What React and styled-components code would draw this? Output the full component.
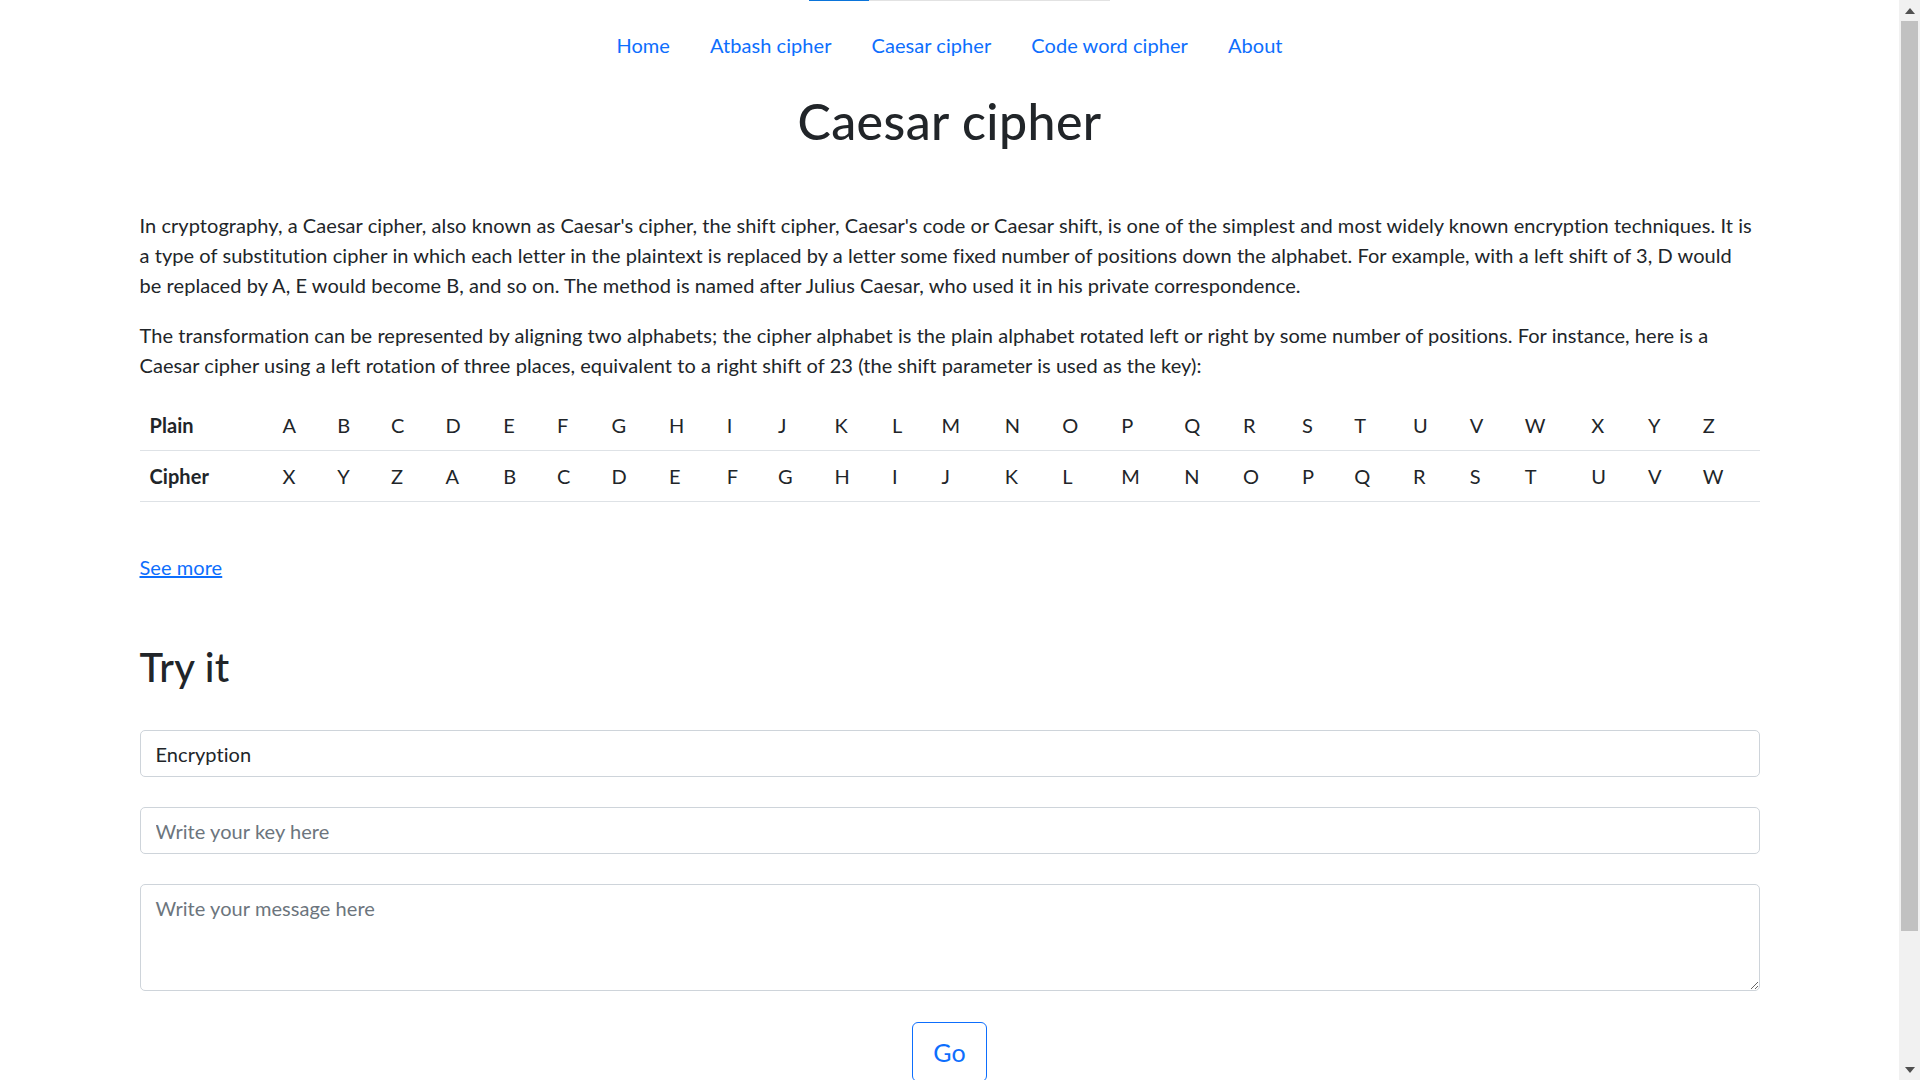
import React from "react";
import styled, { createGlobalStyle } from "styled-components";

const GlobalStyle = createGlobalStyle`
  html, body { margin: 0; padding: 0; background: #fff; }
  body {
    font-family: "Lato", "Segoe UI", sans-serif;
    font-size: 20px;
    line-height: 1.5;
    color: #212529;
    letter-spacing: 0.06px;
  }
  *, *::before, *::after { box-sizing: border-box; }
`;

const Page = styled.div`
  margin-right: 21px;
  min-height: 1100px;
`;

const LoadStrip = styled.div`
  height: 1px;
  display: flex;
  padding-left: 809px;
`;

const LoadTrack = styled.div`
  width: 301px;
  height: 1px;
  background: #e2e2e2;
  display: flex;
`;

const LoadFill = styled.div`
  width: 60px;
  height: 1px;
  background: #0a74da;
`;

const Nav = styled.nav`
  display: flex;
  justify-content: center;
  padding-top: 19px;
`;

const NavLink = styled.a`
  display: block;
  padding: 10px 20px;
  color: #0d6efd;
  text-decoration: none;
  font-size: 20px;
  line-height: 30px;
  cursor: pointer;
`;

const Container = styled.main`
  max-width: 1650px;
  margin: 0 auto;
  padding: 0 15px;
`;

const Title = styled.h1`
  font-size: 50px;
  font-weight: 500;
  line-height: 1.2;
  text-align: center;
  margin: 21px 0 59px;
  letter-spacing: 0.45px;
`;

const Para = styled.p`
  margin: 0 0 20px;
`;

const Table = styled.table`
  width: 100%;
  border-collapse: collapse;
  margin-bottom: 20px;
`;

const HeadCell = styled.th`
  text-align: left;
  font-weight: 700;
  padding: 10px 12px 10px 10px;
  border-bottom: 1px solid #dee2e6;
  line-height: 30px;
`;

const Cell = styled.td`
  padding: 10px;
  border-bottom: 1px solid #dee2e6;
  line-height: 30px;
`;

const MoreLink = styled.a`
  display: inline-block;
  margin-top: 30px;
  color: #0d6efd;
  text-decoration: underline;
  cursor: pointer;
`;

const SubTitle = styled.h2`
  font-size: 40px;
  font-weight: 500;
  line-height: 1.2;
  margin: 61px 0 39px;
  letter-spacing: 0.3px;
`;

const Form = styled.form`
  display: flex;
  flex-direction: column;
  gap: 30px;
`;

const fieldBase = `
  display: block;
  width: 100%;
  padding: 7.5px 15px;
  font-family: "Lato", "Segoe UI", sans-serif;
  font-size: 20px;
  line-height: 30px;
  color: #212529;
  background: #fff;
  border: 1px solid #ced4da;
  border-radius: 5px;
  letter-spacing: 0.06px;
  outline: none;
  &::placeholder { color: #6c757d; opacity: 1; }
`;

const Select = styled.select`
  ${fieldBase}
  appearance: none;
  height: 47px;
`;

const Input = styled.input`
  ${fieldBase}
  height: 47px;
`;

const TextArea = styled.textarea`
  ${fieldBase}
  height: 107px;
  resize: vertical;
`;

const ButtonRow = styled.div`
  display: flex;
  justify-content: center;
  padding-top: 1px;
`;

const GoButton = styled.button`
  font-family: "Lato", "Segoe UI", sans-serif;
  font-size: 25px;
  line-height: 37.5px;
  padding: 11px 20px 9px;
  color: #0d6efd;
  background: transparent;
  border: 1px solid #0d6efd;
  border-radius: 6px;
  cursor: pointer;
`;

const ScrollBar = styled.div`
  position: fixed;
  top: 0;
  right: 0;
  width: 21px;
  height: 100vh;
  background: #f1f1f1;
  display: flex;
  flex-direction: column;
`;

const ScrollArrow = styled.div`
  height: 21px;
  display: flex;
  align-items: center;
  justify-content: center;
`;

const ScrollThumb = styled.div`
  margin: 0 2px;
  height: 910px;
  background: #c1c1c1;
`;

const ScrollSpacer = styled.div`
  flex: 1;
`;

const letters = "ABCDEFGHIJKLMNOPQRSTUVWXYZ".split("");
const shifted = letters.map((_, i) => letters[(i + 23) % 26]);

const Arrow = ({ up }) => (
  <svg width="10" height="6" viewBox="0 0 10 6">
    <polygon points={up ? "0,6 10,6 5,0" : "0,0 10,0 5,6"} fill="#505050" />
  </svg>
);

export default function App() {
  return (
    <>
      <GlobalStyle />
      <Page>
        <LoadStrip>
          <LoadTrack>
            <LoadFill />
          </LoadTrack>
        </LoadStrip>
        <Nav>
          <NavLink>Home</NavLink>
          <NavLink>Atbash cipher</NavLink>
          <NavLink>Caesar cipher</NavLink>
          <NavLink>Code word cipher</NavLink>
          <NavLink>About</NavLink>
        </Nav>
        <Container>
          <Title>Caesar cipher</Title>
          <Para>
            In cryptography, a Caesar cipher, also known as Caesar's cipher, the shift cipher, Caesar's code or Caesar
            shift, is one of the simplest and most widely known encryption techniques. It is a type of substitution
            cipher in which each letter in the plaintext is replaced by a letter some fixed number of positions down
            the alphabet. For example, with a left shift of 3, D would be{"\u00A0"}replaced by A, E would become B, and so on.
            The method is named after Julius Caesar, who used it in his private correspondence.
          </Para>
          <Para>
            The transformation can be represented by aligning two alphabets; the cipher alphabet is the plain alphabet
            rotated left or right by some number of positions. For instance, here is a Caesar cipher using a left
            rotation of three places, equivalent to a right shift of 23 (the shift parameter is used as the key):
          </Para>
          <Table>
            <tbody>
              <tr>
                <HeadCell>Plain</HeadCell>
                {letters.map((l) => (
                  <Cell key={l}>{l}</Cell>
                ))}
              </tr>
              <tr>
                <HeadCell>Cipher</HeadCell>
                {shifted.map((l, i) => (
                  <Cell key={i}>{l}</Cell>
                ))}
              </tr>
            </tbody>
          </Table>
          <MoreLink>See more</MoreLink>
          <SubTitle>Try it</SubTitle>
          <Form onSubmit={(e) => e.preventDefault()}>
            <Select defaultValue="enc">
              <option value="enc">Encryption</option>
              <option value="dec">Decryption</option>
            </Select>
            <Input placeholder="Write your key here" />
            <TextArea placeholder="Write your message here" />
            <ButtonRow>
              <GoButton type="submit">Go</GoButton>
            </ButtonRow>
          </Form>
        </Container>
      </Page>
      <ScrollBar>
        <ScrollArrow>
          <Arrow up />
        </ScrollArrow>
        <ScrollThumb />
        <ScrollSpacer />
        <ScrollArrow>
          <Arrow />
        </ScrollArrow>
      </ScrollBar>
    </>
  );
}
